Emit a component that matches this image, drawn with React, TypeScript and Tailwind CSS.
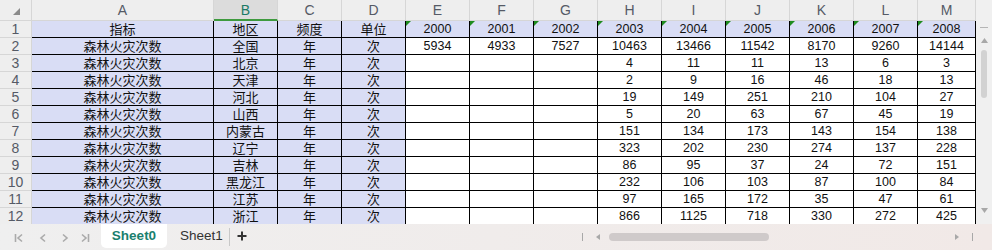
import React from "react";

const cols = ["A", "B", "C", "D", "E", "F", "G", "H", "I", "J", "K", "L", "M"];
const header = ["指标", "地区", "频度", "单位", "2000", "2001", "2002", "2003", "2004", "2005", "2006", "2007", "2008"];
const regions = ["全国", "北京", "天津", "河北", "山西", "内蒙古", "辽宁", "吉林", "黑龙江", "江苏", "浙江"];
const data: string[][] = [
  ["5934", "4933", "7527", "10463", "13466", "11542", "8170", "9260", "14144"],
  ["", "", "", "4", "11", "11", "13", "6", "3"],
  ["", "", "", "2", "9", "16", "46", "18", "13"],
  ["", "", "", "19", "149", "251", "210", "104", "27"],
  ["", "", "", "5", "20", "63", "67", "45", "19"],
  ["", "", "", "151", "134", "173", "143", "154", "138"],
  ["", "", "", "323", "202", "230", "274", "137", "228"],
  ["", "", "", "86", "95", "37", "24", "72", "151"],
  ["", "", "", "232", "106", "103", "87", "100", "84"],
  ["", "", "", "97", "165", "172", "35", "47", "61"],
  ["", "", "", "866", "1125", "718", "330", "272", "425"],
];

const cjk = { fontFamily: '"Noto Sans CJK SC", "Noto Sans", sans-serif' };
const lat = { fontFamily: '"Liberation Sans", Arial, sans-serif' };

function Cell({ text, lavender, tri }: { text: string; lavender: boolean; tri?: boolean }) {
  const isNum = /^[0-9]*$/.test(text);
  return (
    <div
      className={`relative h-[17px] border-r border-b border-black flex items-center justify-center overflow-hidden whitespace-nowrap text-[#111] ${
        lavender ? "bg-[#d9ddf5]" : "bg-white"
      } ${isNum ? "text-[12.5px]" : "text-[13px]"}`}
      style={isNum ? lat : cjk}
    >
      {tri && (
        <svg className="absolute left-0 top-0" width="5" height="5" viewBox="0 0 5 5">
          <polygon points="0,0 5,0 0,5" fill="#1e8c1e" />
        </svg>
      )}
      <span className="leading-[14px]">{text}</span>
    </div>
  );
}

export default function App() {
  const rows: string[][] = [header];
  regions.forEach((r, i) => rows.push(["森林火灾次数", r, "年", "次", ...data[i]]));
  return (
    <div className="w-[992px] h-[250px] flex flex-col overflow-hidden bg-white" style={lat}>
      <div className="flex h-[224px]">
        <div className="w-[976px] h-[224px] overflow-hidden">
          <div className="grid grid-cols-[32px_182px_64px_64px_64px_64px_64px_64px_64px_64px_64px_64px_64px_58px]">
            {/* corner */}
            <div className="h-[21px] bg-[#eeeeee] border-r border-b border-[#d6d6d6] flex items-center justify-center">
              <svg width="7" height="7" viewBox="0 0 7 7" className="mt-[3px] ml-[2px]">
                <polygon points="7,0 7,7 0,7" fill="#8a8a8a" />
              </svg>
            </div>
            {cols.map((c) =>
              c === "B" ? (
                <div
                  key={c}
                  className="h-[21px] bg-[#dcdcdc] border-r border-[#d6d6d6] border-b-2 border-b-[#3e9a3e] flex items-center justify-center text-[14px] leading-[16px] text-[#1b7a66]"
                >
                  {c}
                </div>
              ) : (
                <div
                  key={c}
                  className="h-[21px] bg-[#eeeeee] border-r border-b border-[#d6d6d6] flex items-center justify-center text-[14px] leading-[16px] text-[#555a66]"
                >
                  {c}
                </div>
              )
            )}
            {rows.map((row, ri) => (
              <React.Fragment key={ri}>
                <div className="h-[17px] bg-[#eeeeee] border-r border-b border-[#d6d6d6] flex items-center justify-center text-[14px] leading-[16px] text-[#555a66]">
                  {ri + 1}
                </div>
                {row.map((t, ci) => (
                  <Cell key={ci} text={t} lavender={ri === 0 || ci < 4} tri={ri === 0 && ci >= 4} />
                ))}
              </React.Fragment>
            ))}
          </div>
        </div>
        {/* vertical scrollbar */}
        <div className="w-[16px] h-[224px] bg-[#f0f0f0] flex flex-col items-center">
          <div className="mt-[27px] w-[8px] h-[1px] bg-[#b5b5b5]" />
          <svg width="7" height="5" viewBox="0 0 7 5" className="mt-[10px]">
            <polygon points="3.5,0 7,5 0,5" fill="#a8a8a8" />
          </svg>
          <div className="mt-[7px] w-[6px] h-[48px] rounded-full bg-[#d2d2d2]" />
          <div className="flex-1" />
          <svg width="7" height="5" viewBox="0 0 7 5" className="mb-[11px]">
            <polygon points="0,0 7,0 3.5,5" fill="#a8a8a8" />
          </svg>
        </div>
      </div>
      {/* bottom bar */}
      <div className="h-[26px] flex items-start bg-linear-to-r from-[#efefef] to-[#f1e9e7] relative">
        <div className="flex items-center h-[26px] pl-[14px]">
          <svg width="10" height="10" viewBox="0 0 10 10" className="mt-[1px]">
            <path d="M1.5 1v8M8 1.5L4 5l4 3.5" stroke="#aaaaaa" strokeWidth="1.6" fill="none" />
          </svg>
          <svg width="10" height="10" viewBox="0 0 10 10" className="ml-[14px] mt-[1px]">
            <path d="M7 1.5L3 5l4 3.5" stroke="#aaaaaa" strokeWidth="1.6" fill="none" />
          </svg>
          <svg width="10" height="10" viewBox="0 0 10 10" className="ml-[12px] mt-[1px]">
            <path d="M3 1.5L7 5l-4 3.5" stroke="#aaaaaa" strokeWidth="1.6" fill="none" />
          </svg>
          <svg width="10" height="10" viewBox="0 0 10 10" className="ml-[10px] mt-[1px]">
            <path d="M2 1.5L6 5l-4 3.5M8.5 1v8" stroke="#aaaaaa" strokeWidth="1.6" fill="none" />
          </svg>
        </div>
        <div className="ml-[11px] w-[66px] h-[24px] bg-white rounded-b-[5px] flex items-center justify-center text-[13.5px] font-bold text-[#1a7f6e]">
          Sheet0
        </div>
        <div className="ml-[13px] h-[24px] flex items-center text-[13.5px] text-[#333]">Sheet1</div>
        <div className="ml-[6px] mt-[4px] w-[1px] h-[18px] bg-[#c8c8c8]" />
        <div className="ml-[7px] h-[24px] flex items-center">
          <svg width="10" height="10" viewBox="0 0 10 10">
            <path d="M5 0.5v9M0.5 5h9" stroke="#333" strokeWidth="2" fill="none" />
          </svg>
        </div>
        <div className="flex-1" />
        <div className="flex items-center h-[26px] pr-[19px]">
          <div className="w-[1px] h-[8px] bg-[#a8a8a8]" />
          <svg width="4" height="6" viewBox="0 0 4 6" className="ml-[13px]">
            <polygon points="4,0 4,6 0,3" fill="#a8a8a8" />
          </svg>
          <div className="ml-[9px] w-[160px] h-[8px] rounded-full bg-[#cfcaca]" />
          <div className="w-[186px]" />
          <svg width="4" height="6" viewBox="0 0 4 6">
            <polygon points="0,0 0,6 4,3" fill="#a8a8a8" />
          </svg>
          <div className="ml-[13px] w-[1px] h-[8px] bg-[#a8a8a8]" />
        </div>
      </div>
    </div>
  );
}
